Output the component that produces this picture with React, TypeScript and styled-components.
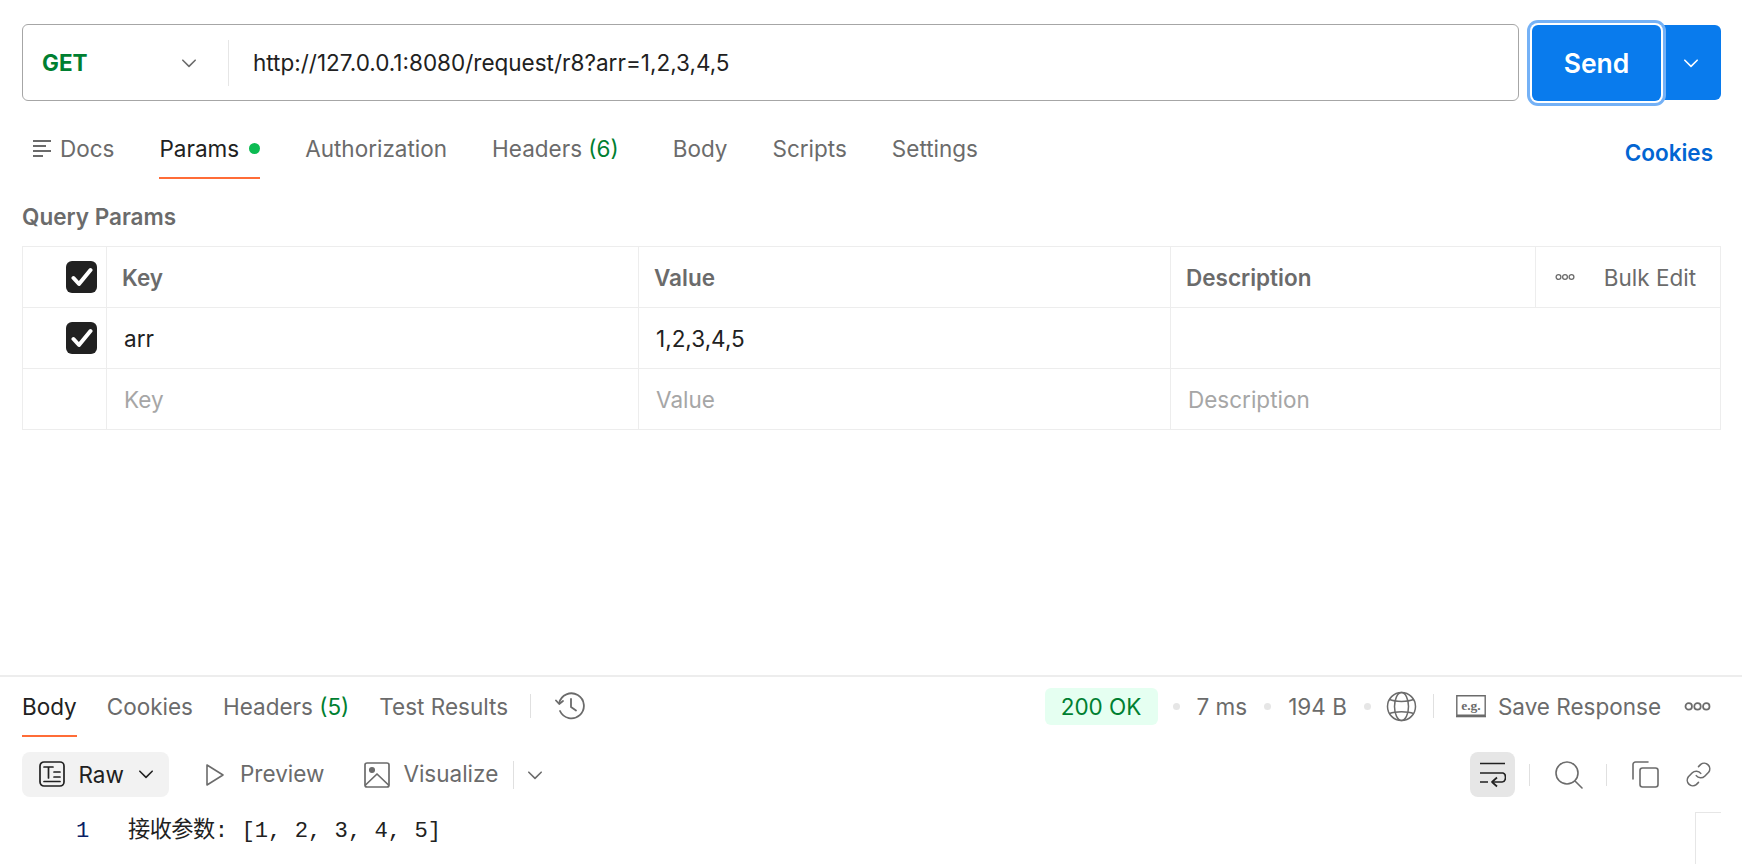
import React from "react";
import styled, { createGlobalStyle } from "styled-components";

const Global = createGlobalStyle`
  html, body { margin: 0; height: 100%; background: #fff; overflow: hidden; }
  #root { height: 100%; }
  * { box-sizing: border-box; }
`;

const Page = styled.div`
  height: 864px;
  display: flex;
  flex-direction: column;
  font-family: Inter, "Noto Sans", sans-serif;
  font-size: 22.5px;
  color: #6b6b6b;
`;
const RequestPane = styled.section`
  flex: 1;
  padding: 24px 21px 0 22px;
`;
const UrlRow = styled.div`
  display: flex;
  align-items: flex-start;
`;
const UrlBox = styled.div`
  flex: 1;
  height: 77px;
  display: flex;
  align-items: center;
  border: 1px solid #a6a6a6;
  border-radius: 6px;
`;
const Method = styled.div`
  width: 206px;
  height: 46px;
  flex: none;
  padding: 0 19px;
  display: flex;
  align-items: center;
  justify-content: space-between;
  border-right: 1px solid #e6e6e6;
  color: #007f31;
  font-weight: 700;
  svg { color: #6b6b6b; margin-right: 11px; }
`;
const UrlText = styled.div`
  padding-left: 24px;
  color: #212121;
`;
const SendButton = styled.button`
  position: relative;
  z-index: 1;
  width: 129px;
  height: 76px;
  margin: 1px 0 0 13px;
  border: 0;
  border-radius: 6px;
  background: #097bed;
  color: #fff;
  font: 600 26.5px Inter, sans-serif;
  box-shadow: 0 0 0 2px #fff, 0 0 0 5px #74b1f6;
`;
const SendMenu = styled.div`
  width: 60px;
  height: 75px;
  margin-top: 1px;
  display: flex;
  align-items: center;
  justify-content: center;
  background: #097bed;
  color: #fff;
  border-radius: 0 6px 6px 0;
`;
const TabRow = styled.nav`
  height: 78px;
  display: flex;
  align-items: center;
  justify-content: space-between;
`;
const TabList = styled.div`
  height: 100%;
  display: flex;
  gap: 45px;
  padding-left: 10px;
`;
const Tab = styled.div<{ $active?: boolean; $wide?: boolean; $gap?: number }>`
  height: 100%;
  display: flex;
  align-items: center;
  gap: ${(p) => p.$gap ?? 10}px;
  padding-top: 18px;
  margin-right: ${(p) => (p.$wide ? "9px" : "0")};
  color: ${(p) => (p.$active ? "#212121" : "#6b6b6b")};
  border-bottom: 2.5px solid ${(p) => (p.$active ? "#ff6c37" : "transparent")};
`;
const Count = styled.span`
  color: #007f31;
`;
const Dot = styled.span`
  width: 11px;
  height: 11px;
  border-radius: 50%;
  background: #0cbb52;
`;
const CookiesLink = styled.a`
  color: #0265d2;
  font-weight: 600;
  padding: 24px 8px 0 0;
`;
const SectionTitle = styled.h2`
  margin: 0;
  height: 67px;
  padding-top: 8px;
  display: flex;
  align-items: center;
  font-size: 22.5px;
  font-weight: 600;
`;
const Table = styled.div`
  display: grid;
  grid-template-columns: 84px 532px 532px 365px 1fr;
  grid-auto-rows: 61px;
  border-top: 1px solid #ededed;
  border-left: 1px solid #ededed;
`;
const Cell = styled.div<{ $span?: number; $head?: boolean; $muted?: boolean; $end?: boolean }>`
  grid-column: span ${(p) => p.$span ?? 1};
  display: flex;
  align-items: center;
  justify-content: ${(p) => (p.$end ? "flex-end" : "flex-start")};
  padding: 0 ${(p) => (p.$head ? "15px" : "17px")};
  border-right: 1px solid #ededed;
  border-bottom: 1px solid #ededed;
  font-weight: ${(p) => (p.$head ? 600 : 400)};
  color: ${(p) => (p.$muted ? "#a6a6a6" : p.$head ? "#6b6b6b" : "#212121")};
`;
const CheckCell = styled(Cell)`
  padding: 0 9px 0 0;
`;
const Box = styled.span`
  width: 31px;
  height: 32px;
  display: flex;
  align-items: center;
  justify-content: center;
  border-radius: 6px;
  background: #212121;
  color: #fff;
`;
const BulkCell = styled.div`
  display: flex;
  align-items: center;
  justify-content: space-between;
  padding: 0 24px 0 19px;
  border-right: 1px solid #ededed;
  border-bottom: 1px solid #ededed;
  color: #6b6b6b;
`;
const ResponsePane = styled.section`
  height: 189px;
  flex: none;
  border-top: 2px solid #ededed;
  display: flex;
  flex-direction: column;
  padding: 0 21px 0 22px;
`;
const ResponseBar = styled.div`
  height: 60px;
  flex: none;
  display: flex;
  align-items: center;
  justify-content: space-between;
`;
const ResponseTabs = styled.div`
  height: 100%;
  display: flex;
  align-items: center;
  gap: 30px;
`;
const ResponseTab = styled.div<{ $active?: boolean }>`
  height: 100%;
  display: flex;
  align-items: center;
  gap: 7px;
  color: ${(p) => (p.$active ? "#212121" : "#6b6b6b")};
  border-bottom: 2.5px solid ${(p) => (p.$active ? "#ff6c37" : "transparent")};
`;
const HistoryGroup = styled.div`
  display: flex;
  align-items: center;
  gap: 24px;
  margin: 0 0 2px -8px;
`;
const Rule = styled.span<{ $h?: number }>`
  width: 1px;
  height: ${(p) => p.$h ?? 24}px;
  background: #e0e0e0;
  flex: none;
`;
const Status = styled.div`
  display: flex;
  align-items: center;
  height: 100%;
  padding-bottom: 2px;
`;
const StatusPill = styled.span`
  width: 113px;
  height: 37px;
  display: flex;
  align-items: center;
  justify-content: center;
  background: #e5fff1;
  border-radius: 6px;
  color: #007f31;
`;
const Meta = styled.span`
  margin: 0 17px;
`;
const Bullet = styled.span`
  width: 7px;
  height: 7px;
  border-radius: 50%;
  background: #e6e6e6;
  flex: none;
`;
const IconSlot = styled.span<{ $l?: number; $r?: number }>`
  display: flex;
  flex: none;
  margin-left: ${(p) => p.$l ?? 0}px;
  margin-right: ${(p) => p.$r ?? 0}px;
`;
const ToolBar = styled.div`
  height: 45px;
  margin-top: 15px;
  flex: none;
  display: flex;
  align-items: center;
  justify-content: space-between;
`;
const Tools = styled.div`
  height: 100%;
  display: flex;
  align-items: center;
`;
const RawButton = styled.div`
  width: 147px;
  height: 45px;
  display: flex;
  align-items: center;
  padding: 0 0 1px 17px;
  gap: 13.5px;
  border-radius: 8px;
  background: #f2f2f2;
  color: #212121;
`;
const ToolLabel = styled.span<{ $l?: number }>`
  margin-left: ${(p) => p.$l ?? 15}px;
  padding-bottom: 2px;
`;
const WrapButton = styled.div`
  width: 45px;
  height: 45px;
  display: flex;
  align-items: center;
  justify-content: center;
  border-radius: 8px;
  background: #e6e6e6;
  color: #212121;
`;
const CodeRow = styled.div`
  flex: 1;
  margin-top: 15px;
  display: flex;
  justify-content: space-between;
`;
const CodeLine = styled.div`
  display: flex;
  height: 32px;
  align-items: baseline;
  margin-top: -1px;
  font: 22.2px "Liberation Mono", "Noto Sans CJK SC", monospace;
  color: #212121;
  white-space: pre;
`;
const LineNo = styled.span`
  width: 106px;
  padding-left: 54px;
  color: #0b1f66;
`;
const CjkRun = styled.span`
  letter-spacing: -0.5px;
`;
const Minimap = styled.div`
  width: 26px;
  border-top: 1px solid #e6e6e6;
  border-left: 1px solid #e6e6e6;
`;

type P = { s?: number };
const Svg = ({ w, h, vb, children, sw = 1.3 }: { w: number; h: number; vb: string; children: React.ReactNode; sw?: number }) => (
  <svg width={w} height={h} viewBox={vb} fill="none" stroke="currentColor" strokeWidth={sw} strokeLinecap="round" strokeLinejoin="round">
    {children}
  </svg>
);
const Chevron = ({ s = 18 }: P) => (
  <Svg w={s} h={s} vb="0 0 16 16" sw={1.4}>
    <path d="M2.500 5.500 8 11l5.500-5.500" />
  </Svg>
);
const DocsIcon = () => (
  <Svg w={20} h={19} vb="0 0 20 19" sw={2}>
    <path d="M1 2h18M1 7h13M1 12h18M1 17h10" strokeLinecap="butt" />
  </Svg>
);
const Check = () => (
  <svg width="22" height="20" viewBox="0 0 22 20" fill="none" stroke="currentColor" strokeWidth="4" strokeLinecap="round" strokeLinejoin="round">
    <path d="M2.500 11 8 17 19.500 3" />
  </svg>
);
const Dots = ({ s = 20 }: P) => (
  <svg width={s} height={s * 0.4} viewBox="0 0 20 8" fill="none" stroke="#6b6b6b" strokeWidth="1.3">
    <circle cx="3.500" cy="4" r="2.400" />
    <circle cx="10" cy="4" r="2.400" />
    <circle cx="16.500" cy="4" r="2.400" />
  </svg>
);
const History = () => (
  <Svg w={30} h={28} vb="0 0 30 28" sw={1.8}>
    <path d="M4.200 11A12.500 12.500 0 1 1 5 19" />
    <path d="M1 8.500 4.200 12 8 9" />
    <path d="M16 7v8l5 3.500" />
  </Svg>
);
const Globe = () => (
  <Svg w={31} h={31} vb="0 0 31 31" sw={1.5}>
    <circle cx="15.500" cy="15.500" r="14" />
    <ellipse cx="15.500" cy="15.500" rx="7" ry="14" />
    <path d="M3.500 8.500c6 2.500 18 2.500 24 0M3.500 22.500c6-2.500 18-2.500 24 0" />
  </Svg>
);
const ExampleIcon = () => (
  <svg width="30" height="23" viewBox="0 0 30 23" fill="none">
    <path d="M.8.8h28.400v19.400H.8z" stroke="#6b6b6b" strokeWidth="1.400" />
    <path d="M0 21.600h30" stroke="#6b6b6b" strokeWidth="1.400" />
    <text x="15" y="14.500" textAnchor="middle" fontFamily="'Liberation Serif', serif" fontSize="13.500" fontWeight="700" fill="#6b6b6b">e.g.</text>
  </svg>
);
const RawIcon = () => (
  <Svg w={26} h={26} vb="0 0 26 26" sw={1.7}>
    <rect x="1" y="1" width="24" height="24" rx="4" />
    <path d="M5 6h9M9.500 6v11M15 11h6M15 16h6M5 20.500h16" />
  </Svg>
);
const PlayIcon = () => (
  <Svg w={20} h={24} vb="0 0 20 24" sw={1.6}>
    <path d="M2 2v20l16-10z" />
  </Svg>
);
const ImageIcon = () => (
  <Svg w={26} h={26} vb="0 0 26 26" sw={1.7}>
    <rect x="1" y="1" width="24" height="24" rx="2" />
    <circle cx="8" cy="8" r="2.200" fill="currentColor" />
    <path d="M1.500 23 13 12l11.500 11" />
  </Svg>
);
const WrapIcon = () => (
  <Svg w={27} h={26} vb="0 0 27 26" sw={1.7}>
    <path d="M1 1.500h25M1 11h23c3.500 1 3.500 8.500-1 9h-9" strokeLinecap="butt" />
    <path d="M18 15.500 13 20l5 4.500M1 20h8" strokeLinecap="butt" />
  </Svg>
);
const SearchIcon = () => (
  <Svg w={28} h={28} vb="0 0 28 28" sw={1.6}>
    <circle cx="12" cy="12" r="11" />
    <path d="m20 20 7 7" />
  </Svg>
);
const CopyIcon = () => (
  <Svg w={27} h={27} vb="0 0 27 27" sw={1.6}>
    <rect x="8" y="7" width="18" height="19" rx="2.500" />
    <path d="M1 18V3.500A2.500 2.500 0 0 1 3.500 1H16" />
  </Svg>
);
const LinkIcon = () => (
  <Svg w={27} h={27} vb="0 0 24 24" sw={1.4}>
    <path d="M10 13a5 5 0 0 0 7.500.500l3.500-3.500a5 5 0 0 0-7-7l-2 2" />
    <path d="M14 11a5 5 0 0 0-7.500-.500L3 14a5 5 0 0 0 7 7l2-2" />
  </Svg>
);

export default function App() {
  return (
    <Page>
      <Global />
      <RequestPane>
        <UrlRow>
          <UrlBox>
            <Method>GET<Chevron /></Method>
            <UrlText>http://127.0.0.1:8080/request/r8?arr=1,2,3,4,5</UrlText>
          </UrlBox>
          <SendButton>Send</SendButton>
          <SendMenu><Chevron /></SendMenu>
        </UrlRow>
        <TabRow>
          <TabList>
            <Tab $gap={8}><DocsIcon />Docs</Tab>
            <Tab $active>Params<Dot /></Tab>
            <Tab>Authorization</Tab>
            <Tab $wide><span>Headers <Count>(6)</Count></span></Tab>
            <Tab>Body</Tab>
            <Tab>Scripts</Tab>
            <Tab>Settings</Tab>
          </TabList>
          <CookiesLink>Cookies</CookiesLink>
        </TabRow>
        <SectionTitle>Query Params</SectionTitle>
        <Table>
          <CheckCell $end><Box><Check /></Box></CheckCell>
          <Cell $head>Key</Cell>
          <Cell $head>Value</Cell>
          <Cell $head>Description</Cell>
          <BulkCell><Dots />Bulk Edit</BulkCell>

          <CheckCell $end><Box><Check /></Box></CheckCell>
          <Cell>arr</Cell>
          <Cell>1,2,3,4,5</Cell>
          <Cell $span={2} />

          <Cell />
          <Cell $muted>Key</Cell>
          <Cell $muted>Value</Cell>
          <Cell $muted $span={2}>Description</Cell>
        </Table>
      </RequestPane>
      <ResponsePane>
        <ResponseBar>
          <ResponseTabs>
            <ResponseTab $active>Body</ResponseTab>
            <ResponseTab>Cookies</ResponseTab>
            <ResponseTab><span>Headers <Count>(5)</Count></span></ResponseTab>
            <ResponseTab>Test Results</ResponseTab>
            <HistoryGroup>
              <Rule />
              <History />
            </HistoryGroup>
          </ResponseTabs>
          <Status>
            <StatusPill>200 OK</StatusPill>
            <IconSlot $l={15}><Bullet /></IconSlot>
            <Meta>7 ms</Meta>
            <Bullet />
            <Meta>194 B</Meta>
            <Bullet />
            <IconSlot $l={15} $r={16}><Globe /></IconSlot>
            <Rule />
            <IconSlot $l={22} $r={12}><ExampleIcon /></IconSlot>
            Save Response
            <IconSlot $l={23} $r={10}><Dots s={27} /></IconSlot>
          </Status>
        </ResponseBar>
        <ToolBar>
          <Tools>
            <RawButton><RawIcon />Raw<Chevron s={18} /></RawButton>
            <IconSlot $l={36}><PlayIcon /></IconSlot>
            <ToolLabel>Preview</ToolLabel>
            <IconSlot $l={40}><ImageIcon /></IconSlot>
            <ToolLabel $l={13}>Visualize</ToolLabel>
            <IconSlot $l={15}><Rule $h={28} /></IconSlot>
            <IconSlot $l={12}><Chevron s={18} /></IconSlot>
          </Tools>
          <Tools>
            <WrapButton><WrapIcon /></WrapButton>
            <IconSlot $l={14}><Rule $h={22} /></IconSlot>
            <IconSlot $l={25}><SearchIcon /></IconSlot>
            <IconSlot $l={23}><Rule $h={22} /></IconSlot>
            <IconSlot $l={25}><CopyIcon /></IconSlot>
            <IconSlot $l={26} $r={9}><LinkIcon /></IconSlot>
          </Tools>
        </ToolBar>
        <CodeRow>
          <CodeLine><LineNo>1</LineNo><CjkRun>接收参数</CjkRun>: [1, 2, 3, 4, 5]</CodeLine>
          <Minimap />
        </CodeRow>
      </ResponsePane>
    </Page>
  );
}
